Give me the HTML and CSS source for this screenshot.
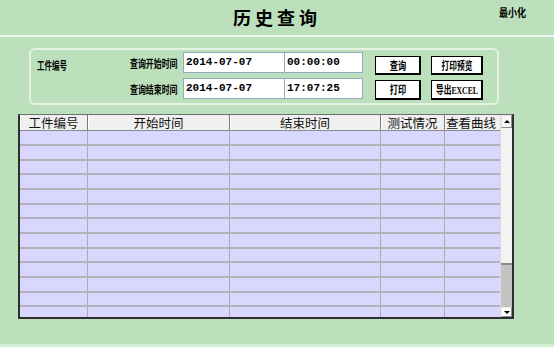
FILE: index.html
```html
<!DOCTYPE html>
<html lang="zh">
<head>
<meta charset="utf-8">
<title>历史查询</title>
<link rel="stylesheet" href="styles.css">
</head>
<body>
<div class="window">
  <header class="titlebar">
    <span class="spacer"></span>
    <h1 class="title">历史查询</h1>
    <span class="minimize"><span class="narrow">最小化</span></span>
  </header>

  <section class="panel">
    <div class="id-label"><span class="narrow">工件编号</span></div>
    <div class="fields">
      <span class="lbl"><span class="narrow">查询开始时间</span></span>
      <div class="box date">2014-07-07</div>
      <div class="box time">00:00:00</div>
      <span class="lbl"><span class="narrow">查询结束时间</span></span>
      <div class="box date">2014-07-07</div>
      <div class="box time">17:07:25</div>
    </div>
    <div class="buttons">
      <button class="btn"><span class="narrow">查询</span></button>
      <button class="btn wide"><span class="narrow">打印预览</span></button>
      <button class="btn"><span class="narrow">打印</span></button>
      <button class="btn wide"><span class="narrow">导出<span class="latin">EXCEL</span></span></button>
    </div>
  </section>

  <section class="grid">
    <div class="cols">
      <div class="row head">
        <div class="cell">工件编号</div>
        <div class="cell">开始时间</div>
        <div class="cell">结束时间</div>
        <div class="cell">测试情况</div>
        <div class="cell last"><span class="clip">查看曲线</span></div>
      </div>
      <div class="rows">
        <div class="row"><div class="cell"></div><div class="cell"></div><div class="cell"></div><div class="cell"></div><div class="cell"></div></div>
        <div class="row"><div class="cell"></div><div class="cell"></div><div class="cell"></div><div class="cell"></div><div class="cell"></div></div>
        <div class="row"><div class="cell"></div><div class="cell"></div><div class="cell"></div><div class="cell"></div><div class="cell"></div></div>
        <div class="row"><div class="cell"></div><div class="cell"></div><div class="cell"></div><div class="cell"></div><div class="cell"></div></div>
        <div class="row"><div class="cell"></div><div class="cell"></div><div class="cell"></div><div class="cell"></div><div class="cell"></div></div>
        <div class="row"><div class="cell"></div><div class="cell"></div><div class="cell"></div><div class="cell"></div><div class="cell"></div></div>
        <div class="row"><div class="cell"></div><div class="cell"></div><div class="cell"></div><div class="cell"></div><div class="cell"></div></div>
        <div class="row"><div class="cell"></div><div class="cell"></div><div class="cell"></div><div class="cell"></div><div class="cell"></div></div>
        <div class="row"><div class="cell"></div><div class="cell"></div><div class="cell"></div><div class="cell"></div><div class="cell"></div></div>
        <div class="row"><div class="cell"></div><div class="cell"></div><div class="cell"></div><div class="cell"></div><div class="cell"></div></div>
        <div class="row"><div class="cell"></div><div class="cell"></div><div class="cell"></div><div class="cell"></div><div class="cell"></div></div>
        <div class="row"><div class="cell"></div><div class="cell"></div><div class="cell"></div><div class="cell"></div><div class="cell"></div></div>
        <div class="row"><div class="cell"></div><div class="cell"></div><div class="cell"></div><div class="cell"></div><div class="cell"></div></div>
      </div>
    </div>
    <div class="scrollbar">
      <div class="sb-btn up"><span class="tri-up"></span></div>
      <div class="sb-track"></div>
      <div class="sb-thumb"></div>
      <div class="sb-btn down"><span class="tri-down"></span></div>
    </div>
  </section>
</div>
</body>
</html>
```

FILE: styles.css
```css
* { box-sizing: border-box; }

html, body {
  margin: 0;
  padding: 0;
  background: #bde0bc;
}

.window {
  width: 554px;
  height: 347px;
  background: #bde0bc;
  border-bottom: 3px solid #d3edd2;
  font-family: "Noto Sans CJK SC", "Liberation Sans", sans-serif;
  overflow: hidden;
}

.narrow {
  display: inline-block;
  white-space: nowrap;
  transform: scaleX(0.72);
  transform-origin: left center;
}

/* ---------- title bar ---------- */
.titlebar {
  height: 37px;
  border-bottom: 2px solid #eef8ee;
  display: grid;
  grid-template-columns: 1fr auto 1fr;
  align-items: start;
}

.title {
  margin: 5px 0 0 0;
  font-size: 18px;
  line-height: 24px;
  font-weight: 700;
  letter-spacing: 4px;
  color: #000;
}

.minimize {
  justify-self: end;
  width: 55px;
  margin-top: 6px;
  font-size: 11px;
  line-height: 13px;
  font-weight: 700;
  color: #000;
}

.minimize .narrow { transform: scaleX(0.82); }

/* ---------- query panel ---------- */
.panel {
  margin: 11px 0 0 29px;
  width: 470px;
  height: 57px;
  border: 2px solid #e4f2e3;
  border-radius: 6px;
  display: flex;
  align-items: flex-start;
}

.id-label {
  width: 99px;
  margin-top: 8px;
  padding-left: 6px;
  font-size: 11px;
  line-height: 14px;
  font-weight: 700;
  color: #000;
}

.id-label .narrow { transform: scaleX(0.68); }

.fields {
  display: grid;
  grid-template-columns: 53px 102px 78px;
  grid-template-rows: 21px 21px;
  row-gap: 5px;
  padding-top: 2px;
}

.lbl {
  align-self: center;
  font-size: 11px;
  line-height: 14px;
  font-weight: 700;
  color: #000;
  white-space: nowrap;
  padding-top: 1px;
}

.box {
  background: #fff;
  border: 1px solid #92a9c3;
  font-family: "Liberation Mono", "DejaVu Sans Mono", monospace;
  font-weight: 700;
  font-size: 11px;
  line-height: 19px;
  padding-left: 2px;
  color: #000;
}

.box.time { margin-left: -1px; }

.buttons {
  margin-left: 12px;
  padding-top: 6px;
  display: grid;
  grid-template-columns: 46px 52px;
  grid-template-rows: 19px 20px;
  column-gap: 10px;
  row-gap: 5px;
}

.btn {
  margin: 0;
  padding: 0;
  background: #fff;
  border: 1px solid #000;
  border-right-width: 2px;
  border-bottom-width: 2px;
  font-family: "Noto Sans CJK SC", sans-serif;
  font-size: 11px;
  line-height: 13px;
  font-weight: 700;
  color: #000;
  white-space: nowrap;
  display: flex;
  align-items: center;
  justify-content: center;
  overflow: visible;
}

.btn .narrow {
  flex: none;
  transform: scaleX(0.75);
  transform-origin: center center;
}

.btn.wide .narrow { transform: scaleX(0.7); }

.btn .latin {
  font-family: "Liberation Serif", serif;
  font-weight: 700;
  font-size: 11px;
}

/* ---------- data grid ---------- */
.grid {
  margin: 9px 0 0 18px;
  width: 496px;
  height: 205px;
  border-top: 1px solid #6e6e6e;
  border-left: 2px solid #2f2f2f;
  border-right: 2px solid #2f2f2f;
  border-bottom: 2px solid #2f2f2f;
  display: flex;
}

.cols {
  width: 480px;
  display: flex;
  flex-direction: column;
  background: #d8d8ff;
}

.rows {
  flex: 1;
  min-height: 0;
  overflow: hidden;
}

.row {
  display: grid;
  grid-template-columns: 68px 142px 151px 64px 55px;
  height: 15px;
  border-bottom: 2px solid #b4b1b8;
  background: #d8d8ff;
}

.rows .row:nth-child(3n) { height: 14px; }

.row .cell { border-right: 1px solid #b3aaa8; }
.row .cell:last-child { border-right: none; }

.row.head {
  flex: none;
  height: 16px;
  background: #f0f0f0;
  border-bottom: 1px solid #8a8a8a;
}

.row.head .cell {
  border-right: 1px solid #7a7a7a;
  box-shadow: inset 1px 0 0 #ffffff;
  font-size: 12.5px;
  line-height: 15px;
  text-align: center;
  color: #111;
  white-space: nowrap;
}

.row.head .cell.last {
  border-right: none;
  text-align: left;
  padding-left: 1px;
}

.clip {
  display: block;
  width: 53px;
  overflow-x: clip;
  overflow-y: visible;
}

.scrollbar {
  width: 12px;
  display: flex;
  flex-direction: column;
  background: #f4f4f4;
  border-left: 1px solid #dcdcdc;
}

.sb-btn {
  height: 13px;
  background: #f6f6f6;
  border: 1px solid #e8e8e8;
  border-right-color: #8a8a8a;
  border-bottom-color: #8a8a8a;
  display: flex;
  align-items: center;
  justify-content: center;
}

.sb-btn.down { height: 10px; background: #ffffff; }

.tri-up {
  width: 0; height: 0;
  border-left: 3px solid transparent;
  border-right: 3px solid transparent;
  border-bottom: 3px solid #000;
}

.tri-down {
  width: 0; height: 0;
  border-left: 3px solid transparent;
  border-right: 3px solid transparent;
  border-top: 3px solid #000;
}

.sb-track {
  flex: 1;
  background: #f3f3f3;
}

.sb-thumb {
  height: 44px;
  background: #c3c3c3;
  border-top: 2px solid #8c8c8c;
}
```
